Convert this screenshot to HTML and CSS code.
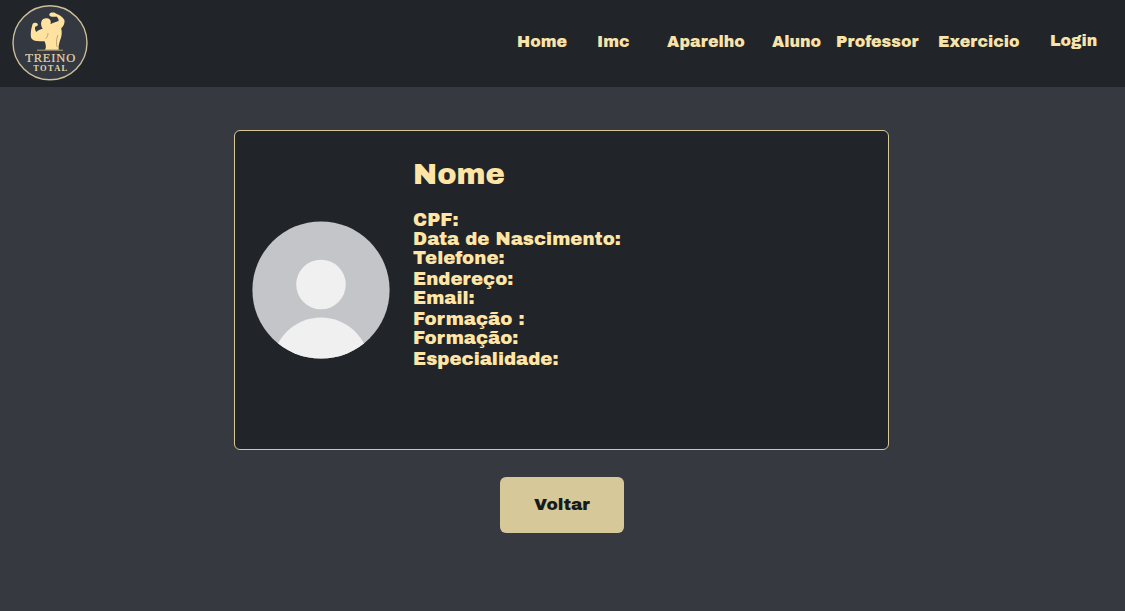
FILE: index.html
```html
<!DOCTYPE html>
<html lang="pt-BR">
<head>
<meta charset="utf-8">
<title>Treino Total</title>
<link rel="stylesheet" href="styles.css">
</head>
<body>
<header class="header">
  <a class="logo" href="#">
    <svg width="76" height="76" viewBox="12 5 76 76" role="img" aria-label="Treino Total">
      <circle class="logo-ring" cx="50" cy="42.8" r="37"/>
      <path class="logo-figure" d="M45 49.8C46.4 47.5 46 44.5 44.6 41.2C42.5 41.5 39.5 41.3 37.3 41.1C34.5 41.3 32 40 31 37.6C30.4 33.8 31 29 32.3 25.3C32.2 23.6 33.5 22.7 35.2 22.8C36.8 22.6 38 23.6 37.8 25C37.4 26.2 36.1 26.5 35.1 26.8C34.7 28.7 35.3 30.3 36.2 31.9C38.2 30.2 40.3 29.4 42.8 28.7C41.2 26.7 40.6 23.7 41.4 21.4C42.3 19 44.6 17.9 47.3 18.3C49.7 18.7 51 20.3 50.8 22.4L50.4 24.2C52.8 22.6 55.8 22 58.6 20.9C58.7 19 57.9 17.8 56.5 16.5C54.8 16.7 52.6 17 50.2 16.2C48.9 15.4 49 13.5 50.3 12.9C52.4 12.2 54.8 12.4 56.3 13.7C59.6 14.5 62.9 17.2 64.5 20.3C64.8 23.3 63.8 26.2 61.2 28.2C62.3 32.5 61.7 37 59.9 40.7C59 44 58.2 47.2 58.8 49.8Z"/>
      <path class="logo-crease" d="M45.5 38.5C47.5 37.2 48.1 35.3 47.9 33M57.9 35C56.2 39.5 56 43.3 57.1 47"/>
      <path class="logo-line" d="M37 50.2H63"/>
      <text class="logo-name" x="50.2" y="61.8" textLength="50" lengthAdjust="spacing">TREINO</text>
      <text class="logo-sub" x="50.2" y="70.6" textLength="34" lengthAdjust="spacing">TOTAL</text>
    </svg>
  </a>
  <nav class="nav">
    <a href="#">Home</a>
    <a href="#">Imc</a>
    <a href="#">Aparelho</a>
    <a href="#">Aluno</a>
    <a href="#">Professor</a>
    <a href="#">Exercicio</a>
    <a class="login" href="#">Login</a>
  </nav>
</header>
<main class="main">
  <section class="card">
    <svg class="avatar" width="138" height="138" viewBox="0 0 138 138" aria-hidden="true">
      <clipPath id="avatar-clip"><circle cx="69" cy="69" r="68.6"/></clipPath>
      <g clip-path="url(#avatar-clip)">
        <rect class="avatar-bg" width="138" height="138"/>
        <circle class="avatar-person" cx="69" cy="63.5" r="24.8"/>
        <circle class="avatar-person" cx="69" cy="145" r="48.5"/>
      </g>
    </svg>
    <div class="info">
      <h1 class="name">Nome</h1>
      <ul class="fields">
        <li>CPF:</li>
        <li>Data de Nascimento:</li>
        <li>Telefone:</li>
        <li>Endereço:</li>
        <li>Email:</li>
        <li>Formação :</li>
        <li>Formação:</li>
        <li>Especialidade:</li>
      </ul>
    </div>
  </section>
  <button class="back" type="button">Voltar</button>
</main>
</body>
</html>
```
FILE: styles.css
```css
* { box-sizing: border-box; }
body {
  margin: 0;
  min-height: 611px;
  background: #363a40;
  color: #ffe6a7;
  font-family: "Archivo Black", Inter, "Liberation Sans", sans-serif;
  font-weight: 400;
}
.header {
  display: flex;
  justify-content: space-between;
  height: 87px;
  padding: 5px 0 0 12px;
  background: #212428;
}
.logo { display: block; height: 76px; }
.logo-ring { fill: #343840; stroke: #cbbf98; stroke-width: 1.4; }
.logo-figure { fill: #ffe2a0; }
.logo-crease { fill: none; stroke: #8c7d59; stroke-width: .6; }
.logo-line { stroke: #cdbd8d; stroke-width: .8; }
.logo-name, .logo-sub { fill: #e3d5a8; font-family: "Liberation Serif", serif; text-anchor: middle; }
.logo-name { font-size: 12.5px; font-weight: 400; stroke: #e3d5a8; stroke-width: .2; }
.logo-sub { font-size: 8.5px; font-weight: 700; }
.nav {
  display: grid;
  grid-template-columns: 80px 70px 105px 64px 102px 112px 75px;
  padding-top: 27px;
  font-size: 15.8px;
  line-height: 20px;
}
.nav a { color: #f8e3ab; text-decoration: none; white-space: nowrap; }
.nav .login { margin-top: -1px; }
.main {
  display: flex;
  flex-direction: column;
  align-items: center;
  padding: 43px 2px 0 0;
}
.card {
  display: flex;
  width: 655px;
  height: 320px;
  padding: 0 17px;
  border: 1px solid #d7c897;
  border-radius: 6px;
  background: #212428;
}
.avatar { flex: none; margin-top: 90px; }
.avatar-bg { fill: #c4c5c9; }
.avatar-person { fill: #f0f0f0; }
.info { padding: 27px 0 0 23px; }
.name { margin: 0; font-size: 29px; font-weight: 400; line-height: 34px; }
.fields {
  display: grid;
  grid-template-rows: 19px 19px 21px 19px 21px 19px 21px 19px;
  margin: 19px 0 0;
  padding: 0;
  list-style: none;
  font-size: 18.2px;
  line-height: 19px;
}
.back {
  width: 124px;
  height: 56px;
  margin-top: 27px;
  padding: 0 0 1px 1px;
  border: 0;
  border-radius: 6px;
  background: #d7c899;
  color: #161c1c;
  font: inherit;
  font-size: 17px;
}
```
